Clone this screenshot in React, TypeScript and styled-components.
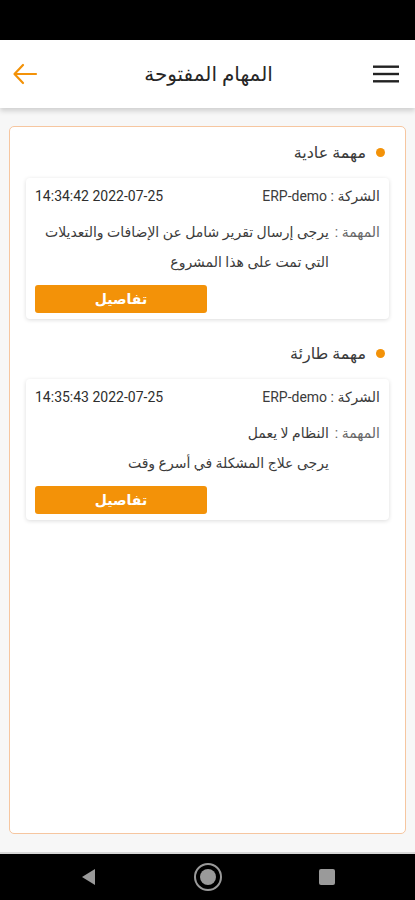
import React from 'react';
import styled, { createGlobalStyle } from 'styled-components';

type Task = {
  id: number;
  kind: string;
  company: string;
  date: string;
  lines: string[];
};

const TASKS: Task[] = [
  {
    id: 1,
    kind: 'مهمة عادية',
    company: 'ERP-demo',
    date: '2022-07-25 14:34:42',
    lines: ['يرجى إرسال تقرير شامل عن الإضافات والتعديلات التي تمت على هذا المشروع'],
  },
  {
    id: 2,
    kind: 'مهمة طارئة',
    company: 'ERP-demo',
    date: '2022-07-25 14:35:43',
    lines: ['النظام لا يعمل', 'يرجى علاج المشكلة في أسرع وقت'],
  },
];

const ORANGE = '#f39208';

const GlobalStyle = createGlobalStyle`
  html, body {
    margin: 0;
    padding: 0;
    background: #000;
  }
  body {
    font-family: Roboto, "DejaVu Sans", "Noto Sans", sans-serif;
  }
`;

const Screen = styled.div`
  display: flex;
  flex-direction: column;
  height: 900px;
  width: 415px;
`;

const StatusBar = styled.div`
  background: #000;
  flex: 0 0 40px;
`;

const Header = styled.header`
  align-items: center;
  background: #fff;
  box-shadow: 0 3px 5px rgba(0, 0, 0, 0.16);
  direction: ltr;
  display: flex;
  flex: 0 0 68px;
  justify-content: space-between;
  padding: 0 14px 0 10px;
  position: relative;
  z-index: 1;
`;

const IconButton = styled.button`
  align-items: center;
  background: transparent;
  border: 0;
  display: flex;
  height: 32px;
  justify-content: center;
  padding: 0;
  width: 30px;
`;

const Title = styled.h1`
  color: #262626;
  direction: rtl;
  font-size: 20px;
  font-weight: 500;
  margin: 0 0 0 6px;
`;

const Body = styled.main`
  background: #f7f7f7;
  display: flex;
  flex: 1;
  flex-direction: column;
  padding: 18px 9px 18px 9px;
`;

const Panel = styled.section`
  background: #fff;
  border: 1.5px solid #f6c6a0;
  border-radius: 5px;
  direction: rtl;
  display: flex;
  flex: 1;
  flex-direction: column;
  padding: 12px 16px 0;
`;

const Group = styled.div`
  display: flex;
  flex-direction: column;
  margin-bottom: 21px;
`;

const GroupLabel = styled.div`
  align-items: center;
  color: #3a3a3a;
  display: flex;
  font-size: 16px;
  gap: 10px;
  height: 26px;
  margin: 0 4px 13px 0;
`;

const Dot = styled.span`
  background: ${ORANGE};
  border-radius: 50%;
  height: 9px;
  width: 9px;
`;

const Card = styled.article`
  background: #fff;
  border-radius: 4px;
  box-shadow: 0 1px 4px rgba(0, 0, 0, 0.14);
  display: flex;
  flex-direction: column;
  padding: 7px 9px 6px;
`;

const MetaRow = styled.div`
  align-items: center;
  color: #3c3c3c;
  display: flex;
  font-size: 14px;
  justify-content: space-between;
  height: 22px;
`;

const DateText = styled.span`
  color: #2e2e2e;
  font-size: 14px;
`;

const TaskRow = styled.div`
  color: #3c3c3c;
  display: flex;
  font-size: 14px;
  line-height: 30px;
  margin-top: 10px;
`;

const TaskLabel = styled.span`
  color: #666;
  flex: 0 0 auto;
  margin-left: 6px;
`;

const TaskText = styled.div`
  flex: 1;
`;

const DetailsButton = styled.button`
  align-self: flex-end;
  background: ${ORANGE};
  border: 0;
  border-radius: 3px;
  color: #fff;
  font-family: inherit;
  font-size: 14px;
  font-weight: 700;
  height: 28px;
  margin: 8px 0 0;
  width: 172px;
`;

const NavBar = styled.nav`
  align-items: center;
  background: #000;
  border-top: 2px solid #d8d8d8;
  display: flex;
  flex: 0 0 46px;
  justify-content: space-between;
  padding: 0 79px 0 80px;
`;

const BackIcon = () => (
  <svg width="26" height="22" viewBox="0 0 26 22" fill="none">
    <path d="M24 11H3M11 2L2.5 11L11 20" stroke={ORANGE} strokeWidth="2.2" strokeLinecap="round" strokeLinejoin="round" />
  </svg>
);

const MenuIcon = () => (
  <svg width="26" height="20" viewBox="0 0 26 20">
    <rect x="0" y="1.5" width="26" height="2.4" fill="#222" />
    <rect x="0" y="8.8" width="26" height="2.4" fill="#222" />
    <rect x="0" y="16.1" width="26" height="2.4" fill="#222" />
  </svg>
);

const TaskCard = ({ task }: { task: Task }) => (
  <Group>
    <GroupLabel>
      <Dot />
      {task.kind}
    </GroupLabel>
    <Card>
      <MetaRow>
        <span>الشركة : {task.company}</span>
        <DateText>{task.date}</DateText>
      </MetaRow>
      <TaskRow>
        <TaskLabel>المهمة :</TaskLabel>
        <TaskText>
          {task.lines.map(line => (
            <div key={line}>{line}</div>
          ))}
        </TaskText>
      </TaskRow>
      <DetailsButton type="button">تفاصيل</DetailsButton>
    </Card>
  </Group>
);

export default function App() {
  return (
    <>
      <GlobalStyle />
      <Screen>
        <StatusBar />
        <Header>
          <IconButton aria-label="رجوع">
            <BackIcon />
          </IconButton>
          <Title>المهام المفتوحة</Title>
          <IconButton aria-label="القائمة">
            <MenuIcon />
          </IconButton>
        </Header>
        <Body>
          <Panel>
            {TASKS.map(task => (
              <TaskCard key={task.id} task={task} />
            ))}
          </Panel>
        </Body>
        <NavBar>
          <svg width="18" height="18" viewBox="0 0 18 18">
            <path d="M15 1V17L2 9Z" fill="#9a9a9a" />
          </svg>
          <svg width="30" height="30" viewBox="0 0 30 30">
            <circle cx="15" cy="15" r="13" fill="none" stroke="#9a9a9a" strokeWidth="2" />
            <circle cx="15" cy="15" r="8" fill="#9a9a9a" />
          </svg>
          <svg width="18" height="18" viewBox="0 0 18 18">
            <rect x="1" y="1" width="16" height="16" rx="2" fill="#9a9a9a" />
          </svg>
        </NavBar>
      </Screen>
    </>
  );
}
